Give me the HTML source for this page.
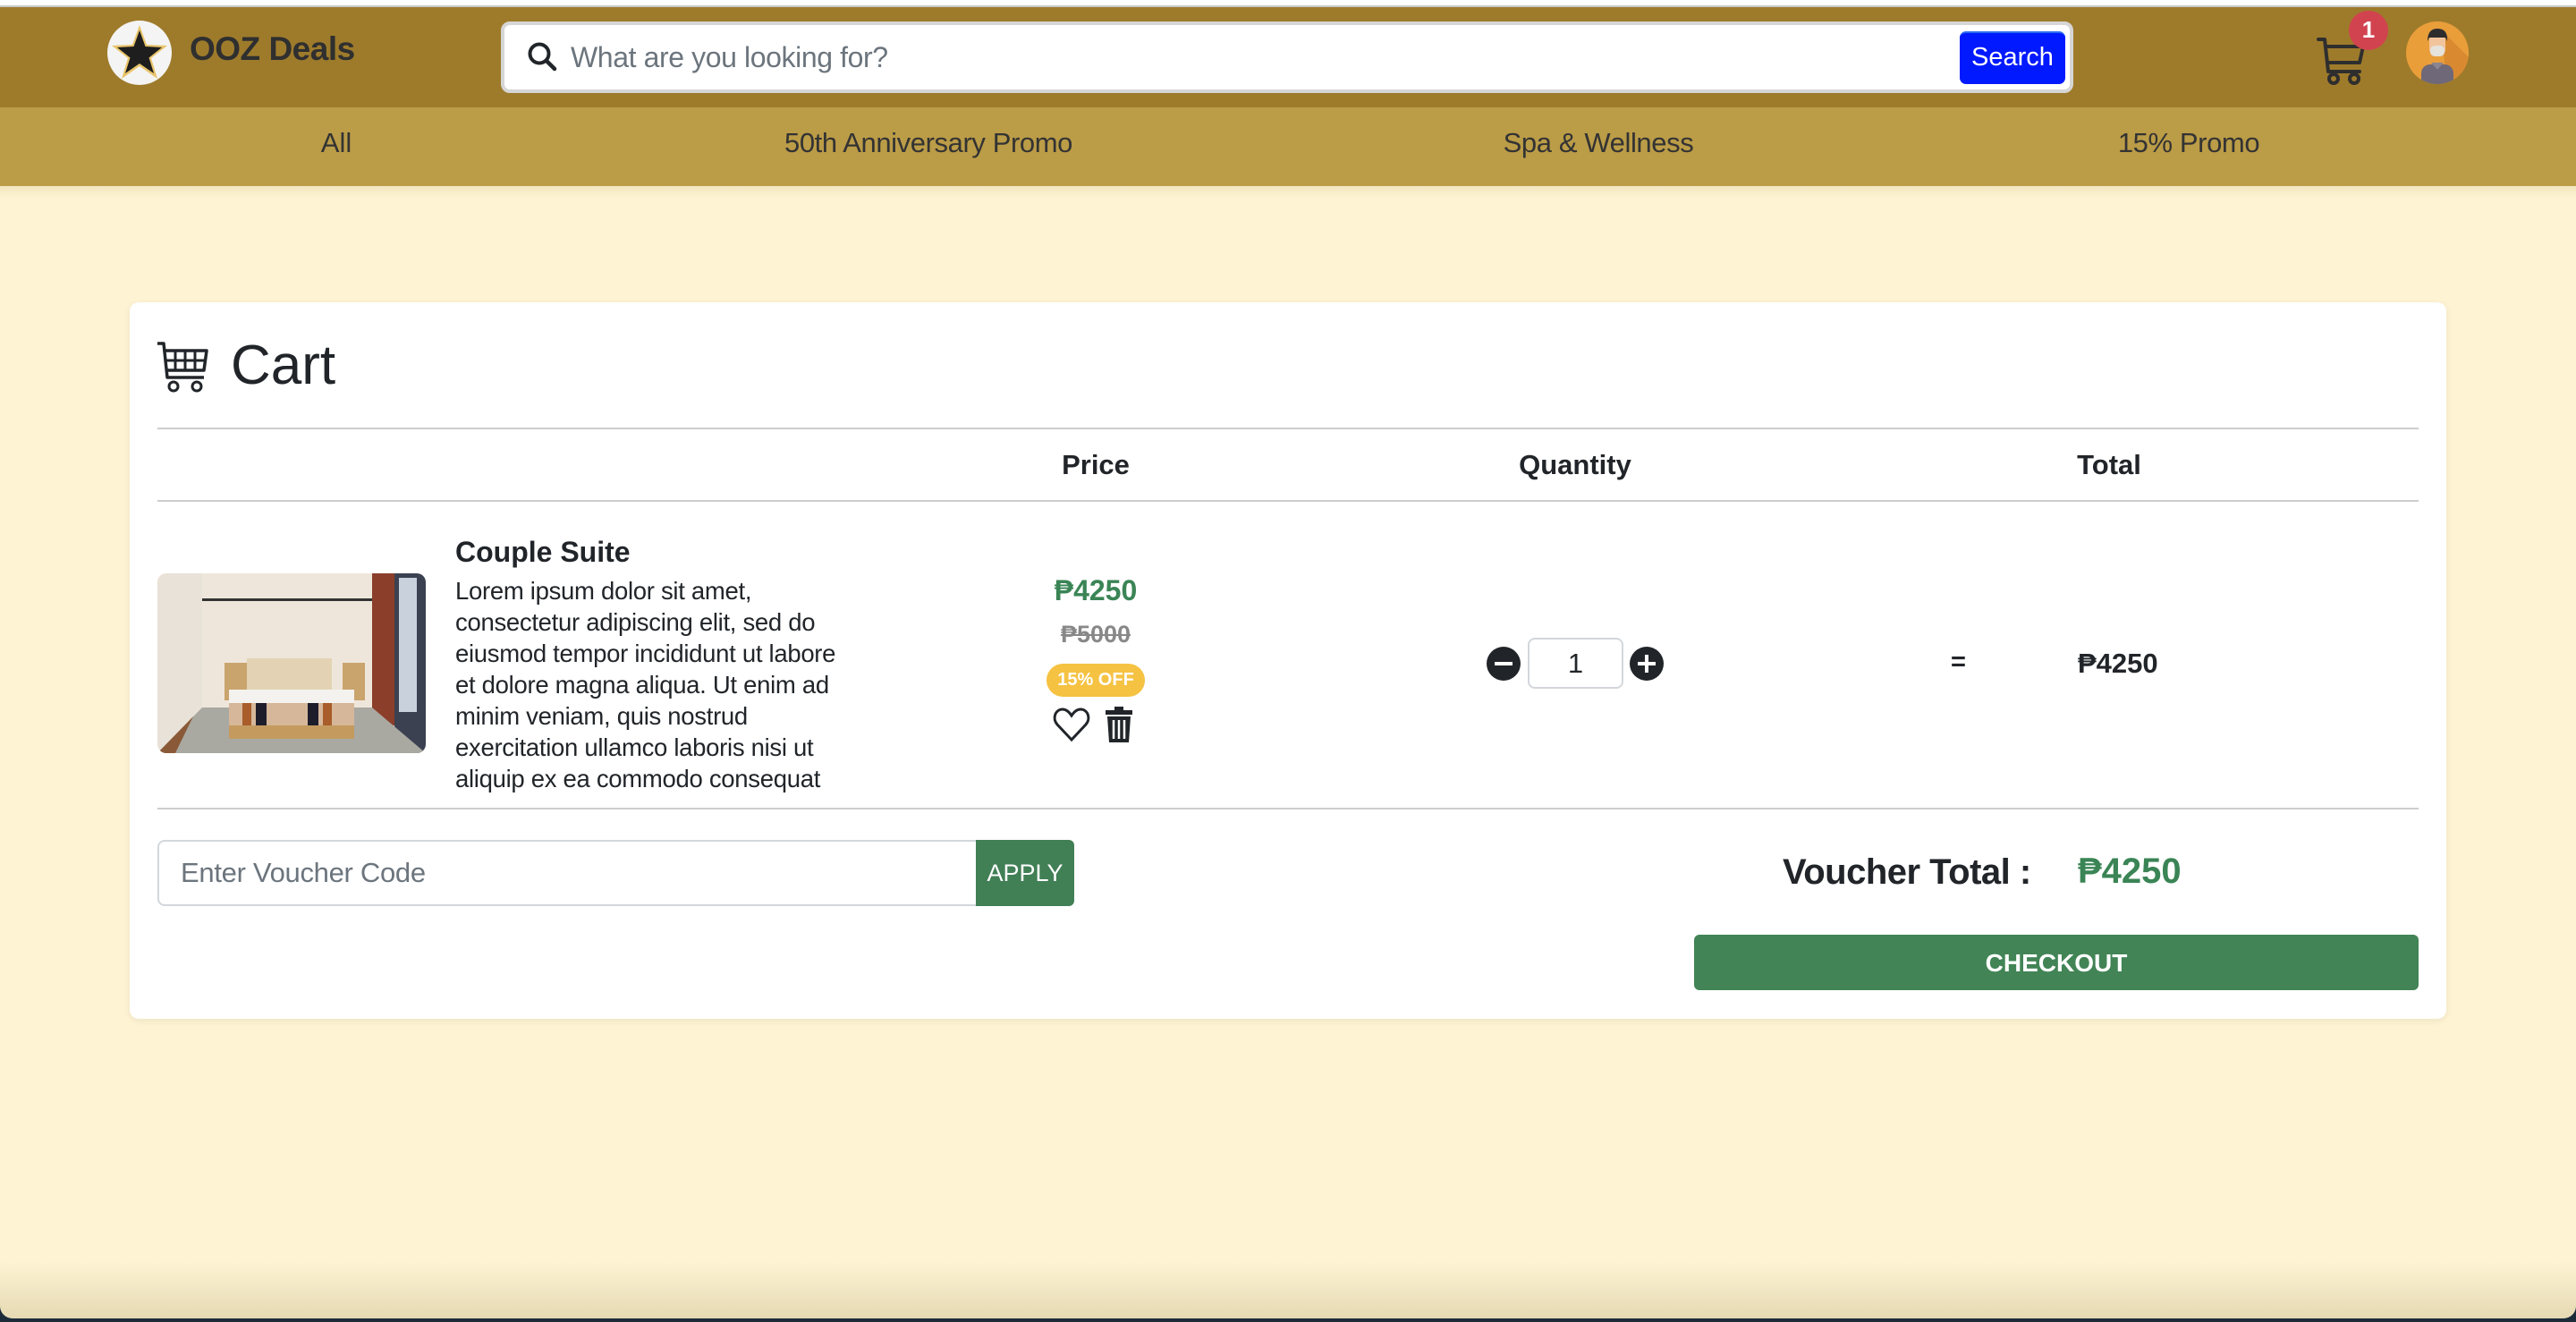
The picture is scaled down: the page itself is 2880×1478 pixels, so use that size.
<!DOCTYPE html>
<html><head><meta charset="utf-8">
<style>
*{box-sizing:border-box;margin:0;padding:0}
body{width:2880px;height:1478px;position:relative;overflow:hidden;background:#1c2b3a;font-family:"Liberation Sans","DejaVu Sans",sans-serif;color:#212529}
.a{position:absolute}
.t{position:absolute;white-space:nowrap}
</style></head><body>
<div class="a" style="left:0;top:0;width:2880px;height:1474px;background:#fef4d4;border-radius:0 0 14px 14px;overflow:hidden">
<div class="a" style="left:0;top:1410px;width:2880px;height:64px;background:linear-gradient(rgba(200,185,140,0),rgba(200,185,140,0.45))"></div>
</div>
<div class="a" style="left:0;top:0;width:2880px;height:7px;background:#fff"></div>
<div class="a" style="left:0;top:6px;width:2880px;height:2px;background:#c8c8c8"></div>
<div class="a" style="left:0;top:8px;width:2880px;height:112px;background:#9e7b2b"></div>
<div class="a" style="left:0;top:120px;width:2880px;height:88px;background:#bb9c47"></div>
<div class="a" style="left:0;top:208px;width:2880px;height:14px;background:linear-gradient(#f3e6bf,#fef4d4)"></div>

<!-- logo -->
<svg class="a" style="left:119px;top:22px" width="74" height="74" viewBox="0 0 74 74">
<circle cx="37" cy="37" r="36" fill="#f4f4f4"/>
<polygon points="37,6 45,28 68,29 50,43 57,66 37,52 17,66 24,43 6,29 29,28" fill="#e8c46a"/>
<polygon points="37,12 43.5,30 62,31 47.5,42.5 53,60 37,49 21,60 26.5,42.5 12,31 30.5,30" fill="#1e1e1e"/>
</svg>
<div class="t" style="left:212px;top:34px;font-size:37px;font-weight:bold;color:#2f2f2f;letter-spacing:-0.5px">OOZ Deals</div>

<!-- search -->
<div class="a" style="left:560px;top:24px;width:1758px;height:80px;background:#fff;border:4px solid #d6d6d6;border-radius:10px"></div>
<svg class="a" style="left:589px;top:46px" width="34" height="34" viewBox="0 0 34 34"><circle cx="14" cy="14" r="10.5" fill="none" stroke="#212529" stroke-width="4"/><line x1="22" y1="22" x2="31" y2="31" stroke="#212529" stroke-width="4.5" stroke-linecap="round"/></svg>
<div class="t" style="left:638px;top:46px;font-size:32px;color:#6c757d;letter-spacing:-0.4px">What are you looking for?</div>
<div class="a" style="left:2191px;top:35px;width:118px;height:59px;background:#0019ff;border-radius:7px;border-top:2px solid #2a6cf0"></div>
<div class="t" style="left:2191px;top:48px;width:118px;text-align:center;font-size:29px;color:#fff">Search</div>

<!-- cart icon -->
<svg class="a" style="left:2590px;top:40px" width="58" height="56" viewBox="0 0 58 56">
<path d="M2 4 H9 L13 40 H48" fill="none" stroke="#2e2e2e" stroke-width="4" stroke-linecap="round" stroke-linejoin="round"/>
<path d="M10 12 H52 L48 30 H12" fill="none" stroke="#2e2e2e" stroke-width="4" stroke-linejoin="round"/>
<circle cx="19" cy="48" r="5" fill="none" stroke="#2e2e2e" stroke-width="4"/>
<circle cx="42" cy="48" r="5" fill="none" stroke="#2e2e2e" stroke-width="4"/>
</svg>
<div class="a" style="left:2626px;top:12px;width:44px;height:44px;border-radius:50%;background:#d1434f"></div>
<div class="t" style="left:2626px;top:18px;width:44px;text-align:center;font-size:26px;font-weight:bold;color:#fff">1</div>
<!-- avatar -->
<svg class="a" style="left:2690px;top:24px" width="70" height="70" viewBox="0 0 70 70">
<defs><clipPath id="c"><circle cx="35" cy="35" r="35"/></clipPath></defs>
<g clip-path="url(#c)">
<rect width="70" height="70" fill="#e99e3a"/>
<path d="M40 10 L75 45 L75 70 L45 70 Z" fill="#d98a30"/>
<rect x="17" y="48" width="36" height="30" rx="10" fill="#6e6878"/>
<rect x="26" y="14" width="18" height="24" rx="7" fill="#f2c49c"/>
<path d="M24 22 Q24 8 35 8 Q47 8 46 22 L44 18 L26 18 Z" fill="#2d2d2d"/>
<rect x="27" y="27" width="16" height="12" rx="5" fill="#e6e2dc"/>
<path d="M28 46 L35 54 L42 46 Z" fill="#8a8592"/>
</g></svg>

<!-- nav -->
<div class="t" style="left:276px;top:142px;width:200px;text-align:center;font-size:31px;color:#333">All</div>
<div class="t" style="left:788px;top:142px;width:500px;text-align:center;font-size:31px;color:#333;letter-spacing:-0.4px">50th Anniversary Promo</div>
<div class="t" style="left:1587px;top:142px;width:400px;text-align:center;font-size:31px;color:#333;letter-spacing:-0.4px">Spa &amp; Wellness</div>
<div class="t" style="left:2247px;top:142px;width:400px;text-align:center;font-size:31px;color:#333;letter-spacing:-0.4px">15% Promo</div>

<!-- card -->
<div class="a" style="left:145px;top:338px;width:2590px;height:801px;background:#fff;border-radius:10px;box-shadow:0 2px 8px rgba(0,0,0,0.08)"></div>
<svg class="a" style="left:174px;top:380px" width="62" height="60" viewBox="0 0 62 60">
<path d="M2 4 H9 L13 42 H54" fill="none" stroke="#212529" stroke-width="3.5" stroke-linejoin="round"/>
<path d="M9 12 H57 L54 34 H12" fill="none" stroke="#212529" stroke-width="3.5" stroke-linejoin="round"/>
<path d="M11 23 H56 M22 12 V34 M33 12 V34 M44 12 V34" stroke="#212529" stroke-width="3"/>
<circle cx="20" cy="52" r="5" fill="none" stroke="#212529" stroke-width="3"/>
<circle cx="46" cy="52" r="5" fill="none" stroke="#212529" stroke-width="3"/>
</svg>
<div class="t" style="left:258px;top:373px;font-size:62px;color:#212529">Cart</div>

<div class="a" style="left:176px;top:478px;width:2528px;height:2px;background:#cdcdcd"></div>
<div class="t" style="left:1075px;top:502px;width:300px;text-align:center;font-size:31px;font-weight:bold">Price</div>
<div class="t" style="left:1611px;top:502px;width:300px;text-align:center;font-size:31px;font-weight:bold">Quantity</div>
<div class="t" style="left:2208px;top:502px;width:300px;text-align:center;font-size:31px;font-weight:bold">Total</div>
<div class="a" style="left:176px;top:559px;width:2528px;height:2px;background:#cdcdcd"></div>

<!-- image -->
<svg class="a" style="left:176px;top:641px" width="300" height="201" viewBox="0 0 300 201">
<defs><clipPath id="r"><rect width="300" height="201" rx="10"/></clipPath></defs>
<g clip-path="url(#r)">
<rect width="300" height="201" fill="#eee6da"/>
<rect x="0" y="0" width="50" height="201" fill="#e8e2d8"/>
<rect x="50" y="28" width="210" height="3" fill="#333"/>
<rect x="240" y="0" width="25" height="170" fill="#8b3e2a"/>
<rect x="265" y="0" width="35" height="201" fill="#3b4150"/>
<rect x="270" y="5" width="20" height="150" fill="#c9d1dc"/>
<polygon points="0,201 50,150 240,150 300,201" fill="#a9a9a2"/>
<polygon points="0,201 40,160 20,201" fill="#8a5a38"/>
<rect x="100" y="95" width="95" height="40" fill="#e3d3b4"/>
<rect x="75" y="100" width="25" height="42" fill="#c9a46d"/>
<rect x="207" y="100" width="25" height="42" fill="#c9a46d"/>
<rect x="80" y="130" width="140" height="55" fill="#c49a5f"/>
<rect x="80" y="130" width="140" height="38" fill="#f4f2ef"/>
<rect x="80" y="145" width="140" height="25" fill="#d6b79a"/>
<rect x="110" y="145" width="12" height="25" fill="#1e1d2b"/><rect x="168" y="145" width="12" height="25" fill="#1e1d2b"/>
<rect x="95" y="145" width="10" height="25" fill="#a85d2a"/><rect x="185" y="145" width="10" height="25" fill="#a85d2a"/>
</g></svg>

<div class="t" style="left:509px;top:599px;font-size:32px;font-weight:bold">Couple Suite</div>
<div class="t" style="left:509px;top:643px;font-size:27.5px;line-height:35px;letter-spacing:-0.3px">Lorem ipsum dolor sit amet,<br>consectetur adipiscing elit, sed do<br>eiusmod tempor incididunt ut labore<br>et dolore magna aliqua. Ut enim ad<br>minim veniam, quis nostrud<br>exercitation ullamco laboris nisi ut<br>aliquip ex ea commodo consequat</div>

<div class="t" style="left:1125px;top:642px;width:200px;text-align:center;font-size:32px;font-weight:bold;color:#3a8455">₱4250</div>
<div class="t" style="left:1125px;top:694px;width:200px;text-align:center;font-size:27px;font-weight:bold;color:#888;text-decoration:line-through">₱5000</div>
<div class="a" style="left:1170px;top:742px;width:110px;height:37px;border-radius:19px;background:#f5c242"></div>
<div class="t" style="left:1170px;top:749px;width:110px;text-align:center;font-size:20px;font-weight:bold;color:#fff">15% OFF</div>
<svg class="a" style="left:1177px;top:790px" width="42" height="40" viewBox="0 0 42 40"><path d="M21 37 L5 20 C-1 13 3 3 11 3 C16 3 19 7 21 10 C23 7 26 3 31 3 C39 3 43 13 37 20 Z" fill="none" stroke="#212529" stroke-width="3"/></svg>
<svg class="a" style="left:1234px;top:788px" width="34" height="44" viewBox="0 0 34 44"><path d="M12 2 H22 V6 H32 V11 H2 V6 H12 Z" fill="#212529"/><path d="M4 13 H30 L28 42 H6 Z" fill="#212529"/><path d="M11 17 V38 M17 17 V38 M23 17 V38" stroke="#fff" stroke-width="2.5"/></svg>

<!-- quantity -->
<svg class="a" style="left:1662px;top:723px" width="38" height="38" viewBox="0 0 38 38"><circle cx="19" cy="19" r="19" fill="#212529"/><rect x="9" y="17" width="20" height="4" fill="#fff"/></svg>
<div class="a" style="left:1708px;top:713px;width:107px;height:57px;border:2px solid #d3d7dc;border-radius:8px"></div>
<div class="t" style="left:1708px;top:724px;width:107px;text-align:center;font-size:31px">1</div>
<svg class="a" style="left:1822px;top:723px" width="38" height="38" viewBox="0 0 38 38"><circle cx="19" cy="19" r="19" fill="#212529"/><rect x="9" y="17" width="20" height="4" fill="#fff"/><rect x="17" y="9" width="4" height="20" fill="#fff"/></svg>
<div class="t" style="left:2181px;top:724px;font-size:29px;font-weight:bold">=</div>
<div class="t" style="left:2323px;top:724px;font-size:31px;font-weight:bold">₱4250</div>

<div class="a" style="left:176px;top:903px;width:2528px;height:2px;background:#cdcdcd"></div>

<!-- voucher -->
<div class="a" style="left:176px;top:939px;width:920px;height:74px;border:2px solid #d3d7dc;border-radius:8px 0 0 8px"></div>
<div class="t" style="left:202px;top:958px;font-size:31px;color:#6c757d;letter-spacing:-0.3px">Enter Voucher Code</div>
<div class="a" style="left:1091px;top:939px;width:110px;height:74px;background:#417f55;border-radius:0 6px 6px 0"></div>
<div class="t" style="left:1091px;top:961px;width:110px;text-align:center;font-size:27px;color:#fff">APPLY</div>
<div class="t" style="left:1993px;top:953px;font-size:40px;font-weight:bold;letter-spacing:-0.5px">Voucher Total :</div>
<div class="t" style="left:2323px;top:952px;font-size:40px;font-weight:bold;color:#3a8455">₱4250</div>
<div class="a" style="left:1894px;top:1045px;width:810px;height:62px;background:#428456;border-radius:6px"></div>
<div class="t" style="left:1894px;top:1061px;width:810px;text-align:center;font-size:28px;font-weight:bold;color:#fff">CHECKOUT</div>
</body></html>
